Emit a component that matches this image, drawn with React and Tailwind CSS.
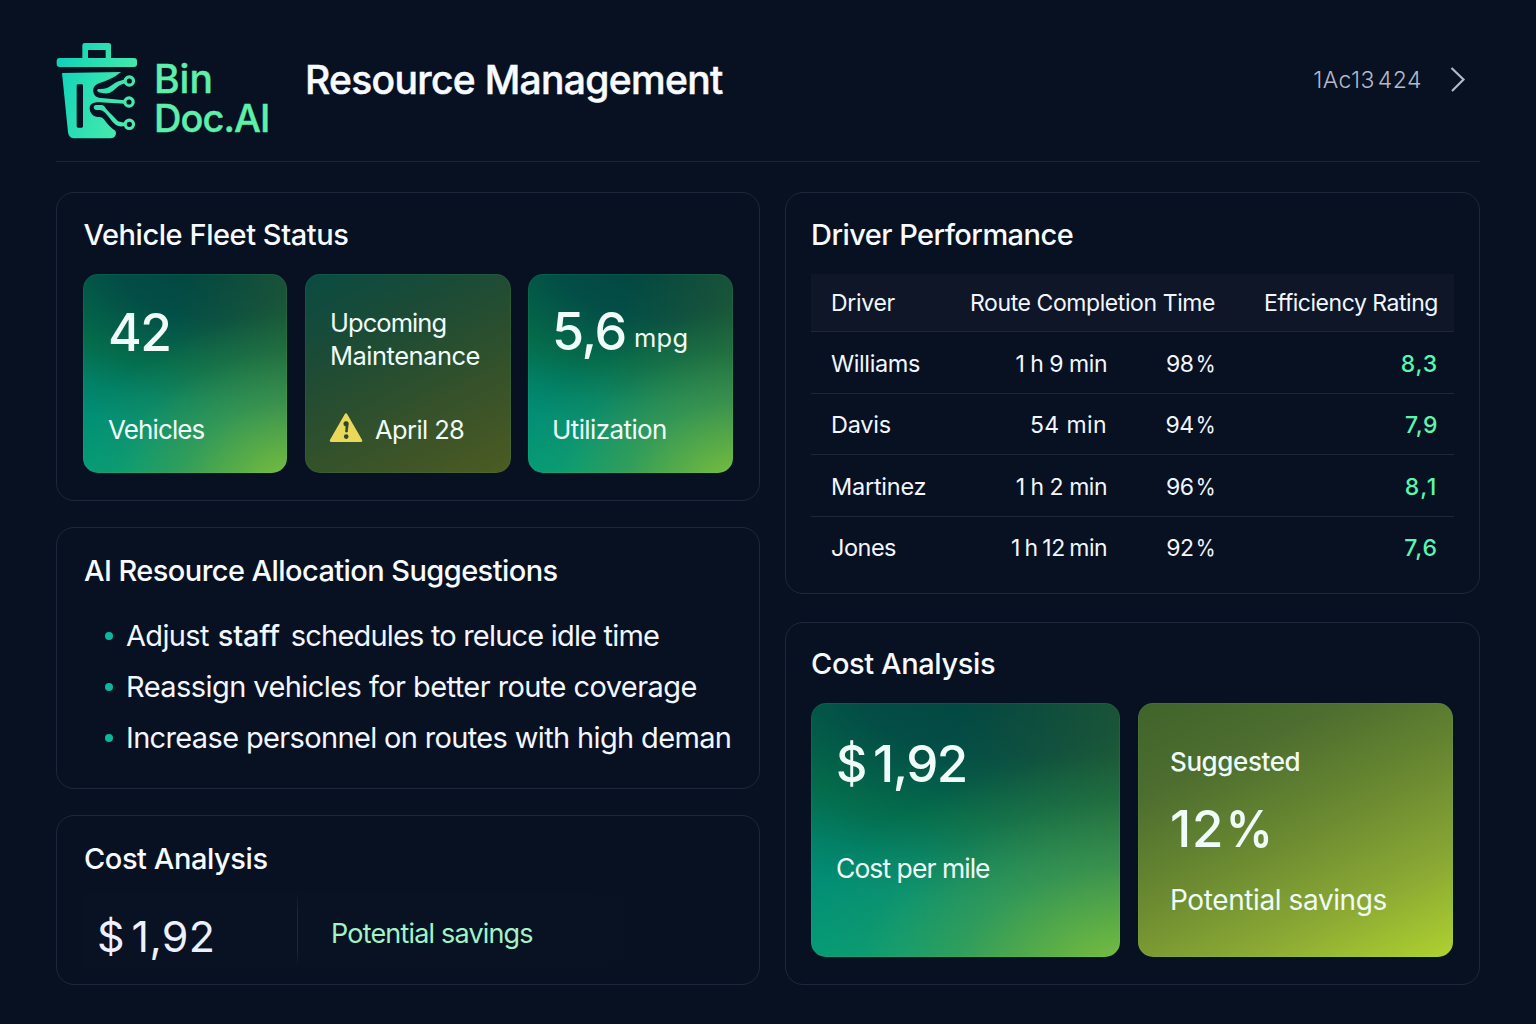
const drivers = [
  { name: "Williams", nameCls: "tracking-[-0.4px]", time: "1 h 9 min", timeCls: "tracking-[-0.48px]", pct: 98, rating: "8,3", ratingCls: "tracking-[0.8px]" },
  { name: "Davis", nameCls: "tracking-[-0.23px]", time: "54 min", timeCls: "tracking-[0.4px]", pct: 94, rating: "7,9", ratingCls: "tracking-[0.5px]" },
  { name: "Martinez", nameCls: "tracking-[-0.25px]", time: "1 h 2 min", timeCls: "tracking-[-0.48px]", pct: 96, rating: "8,1", ratingCls: "tracking-[1.6px]" },
  { name: "Jones", nameCls: "tracking-[-0.5px]", time: "1 h 12 min", timeCls: "tracking-[-0.55px] [word-spacing:-1.2px]", pct: 92, rating: "7,6", ratingCls: "tracking-[0.9px]" },
];

const greenTile =
  "bg-[radial-gradient(ellipse_115%_90%_at_106%_110%,#86c63f_0%,rgba(112,188,66,0.85)_22%,rgba(80,170,80,0.52)_52%,rgba(50,150,90,0.2)_80%,transparent_100%),linear-gradient(105deg,transparent_40%,rgba(62,92,34,0.55)_100%),radial-gradient(ellipse_135%_88%_at_60%_-10%,#034540_0%,rgba(3,72,66,0.88)_35%,rgba(5,100,62,0.72)_65%,rgba(4,118,80,0.35)_85%,transparent_100%),linear-gradient(180deg,#027260_0%,#028573_50%,#029c78_100%)]";

function Panel({ className = "", children }) {
  return (
    <section className={`flex flex-col rounded-[18px] border border-[#1d293a] bg-[#071122] ${className}`}>{children}</section>
  );
}

function Tile({ className = "", children }) {
  return (
    <div className={`flex flex-col rounded-[15px] shadow-[inset_0_0_0_1px_rgba(120,255,170,0.07)] ${className}`}>{children}</div>
  );
}

function Logo() {
  return (
    <svg className="h-[97px] w-[82px] shrink-0" viewBox="48 36 246 291" aria-hidden="true">
      <defs>
        <linearGradient id="bin" gradientUnits="userSpaceOnUse" x1="50" y1="140" x2="290" y2="220">
          <stop offset="0" stopColor="#12d3ba" />
          <stop offset="0.45" stopColor="#2ce0b2" />
          <stop offset="1" stopColor="#4cecab" />
        </linearGradient>
      </defs>
      <g fill="url(#bin)">
        <path fillRule="evenodd" d="M134 39H206Q213 39 213 46V86H127V46Q127 39 134 39ZM144 60V85H197V60Z" />
        <rect x="50" y="84" width="241" height="27" rx="9" />
        <path
          fillRule="evenodd"
          d="M66 129L243 126C222 144 200 152 181 158C165 163 158 172 160 185C162 198 171 203 184 204L254 211V221L178 217C160 216 149 222 149 235C149 249 160 261 174 261C186 260 191 266 198 276C206 287 216 295 224 301C233 309 226 325 212 325H104Q86 325 84 307ZM114 163Q110 163 110 167V289Q110 293 114 293H125Q129 293 129 289V167Q129 163 125 163Z"
        />
        <path d="M175 177Q190 178 201 174C212 169 216 164 226 158C236 153 246 151 256 148L258 159C248 162 240 165 233 170C222 179 215 188 203 190Q189 191 176 187Q167 181 175 177Z" />
        <path d="M167 225H185C193 226 196 233 202 241C211 251 223 261 231 271Q237 277 254 278L254 288Q238 292 228 285C216 276 208 261 196 249C189 242 184 240 170 240Q161 239 161 232Q161 226 167 225Z" />
      </g>
      <g fill="none" stroke="url(#bin)" strokeWidth="9.5">
        <circle cx="268" cy="153" r="12.5" />
        <circle cx="267" cy="216" r="12.5" />
        <circle cx="268" cy="283" r="12.5" />
      </g>
    </svg>
  );
}

function Header() {
  return (
    <header className="flex h-[162px] items-start border-b border-[#1a2536]">
      <div className="flex pt-[42px]">
        <Logo />
        <div className="ml-4 mt-[18px] flex w-[120px] flex-col text-[39px] font-medium leading-[38px] text-[#5eefab] [-webkit-text-stroke:0.4px_#5eefab]">
          <span>Bin</span>
          <span className="mt-[1px] text-[38px] tracking-[-0.95px]">Doc.AI</span>
        </div>
      </div>
      <h1 className="ml-[31px] mt-[60px] text-[39px] font-medium leading-[40px] tracking-[-0.68px] text-[#f8fbff] [-webkit-text-stroke:0.5px_#f8fbff]">
        Resource Management
      </h1>
      <div className="ml-auto mr-[14px] mt-[64px] flex h-8 items-center text-[23px] font-light leading-8 text-[#b4b8ca]">
        <span className="tracking-[0.4px]">1Ac13</span>
        <span className="ml-[3px] tracking-[0.5px]">424</span>
        <svg className="ml-[28px] h-[26px] w-4" viewBox="0 0 16 26" fill="none" stroke="#b4b8ca" strokeWidth="2.2" aria-hidden="true">
          <path d="M1.5 1L13.5 12.5L2 24" />
        </svg>
      </div>
    </header>
  );
}

const heading = "text-[29px] font-medium leading-[36px] text-[#f8fbff]";

function FleetStatus() {
  return (
    <Panel className="h-[309px] pl-[26px] pt-[24px]">
      <h2 className={`${heading} ml-[0.5px] tracking-[-0.45px]`}>Vehicle Fleet Status</h2>
      <div className="mt-[21px] flex h-[199px] text-[#effcf8]">
        <Tile className={`w-[204px] pl-[25px] pt-[32px] ${greenTile}`}>
          <span className="text-[51.5px] font-medium leading-[52px] tracking-[-1.6px]">42</span>
          <span className="mt-[56px] text-[26px] leading-8 tracking-[-0.88px]">Vehicles</span>
        </Tile>
        <Tile className="ml-[18px] w-[206px] bg-[linear-gradient(152deg,#0a4b43_0%,#1c4b36_30%,#2b4f2e_52%,#3d5428_76%,#4c5c22_100%)] pl-[25px] pt-[32px]">
          <span className="text-[25.5px] leading-[33px] tracking-[-0.95px]">Upcoming</span>
          <span className="text-[25.5px] leading-[33px] tracking-[-0.5px]">Maintenance</span>
          <div className="-ml-[1px] mt-[42px] flex h-8">
            <svg className="-mt-[2px] h-[31px] w-[34px]" viewBox="0 0 34 31" aria-hidden="true">
              <path d="M17 2.6L32 28.6H2Z" fill="#ead85a" stroke="#ead85a" strokeWidth="2.6" strokeLinejoin="round" />
              <path d="M14.8 11.5Q14.6 9.6 17 9.6Q19.6 9.6 19.3 11.8L18.3 20H16.6L17 14L15.2 13.5Z" fill="#29472c" stroke="#29472c" strokeWidth="0.7" />
              <circle cx="17.2" cy="24.6" r="2.3" fill="#29472c" />
            </svg>
            <span className="ml-[12px] text-[25.5px] leading-8 tracking-[-0.6px]">April 28</span>
          </div>
        </Tile>
        <Tile className={`ml-[17px] w-[205px] pl-[24px] pt-[32px] ${greenTile}`}>
          <div className="flex h-[52px] items-baseline">
            <span className="text-[52px] font-medium leading-[52px] tracking-[-1.3px]">5,6</span>
            <span className="ml-[8px] -translate-y-[3px] text-[25.5px] leading-8 tracking-[0.2px]">mpg</span>
          </div>
          <span className="mt-[56px] text-[26px] leading-8 tracking-[-0.6px]">Utilization</span>
        </Tile>
      </div>
    </Panel>
  );
}

function Suggestion({ children, className = "" }) {
  return (
    <li className={`flex h-[51px] items-center whitespace-pre ${className}`}>
      <span className="mr-[13px] size-2 shrink-0 rounded-full bg-[#0bb89e]" />
      {children}
    </li>
  );
}

function Suggestions() {
  return (
    <Panel className="h-[262px] pl-[27px] pt-[25px]">
      <h2 className={`${heading} tracking-[-0.57px]`}>AI Resource Allocation Suggestions</h2>
      <ul className="ml-[21px] mt-[21px] text-[29px] leading-[51px] text-[#f2f6ff]">
        <Suggestion>
          <span className="tracking-[-0.65px]">Adjust</span>
          <span className="ml-[9px] font-medium tracking-[-0.2px]">staff</span>
          <span className="ml-[11px] tracking-[-0.81px]">schedules to reluce idle time</span>
        </Suggestion>
        <Suggestion className="tracking-[-0.57px]">Reassign vehicles for better route coverage</Suggestion>
        <Suggestion className="tracking-[-0.65px]">Increase personnel on routes with high deman</Suggestion>
      </ul>
    </Panel>
  );
}

function CostSummary() {
  return (
    <Panel className="h-[170px] pl-[27px] pt-[25px]">
      <h2 className={`${heading} tracking-[-0.43px]`}>Cost Analysis</h2>
      <div className="mt-[16px] flex h-[74px] w-[650px] bg-[linear-gradient(90deg,#091223,#091223_60%,#071122)]">
        <div className="flex w-[213px] pl-[13px] pt-[17px] text-[43px] leading-[52px] text-[#edf0ff]">
          <span>$</span>
          <span className="ml-[7px] tracking-[0.3px]">1,92</span>
        </div>
        <div className="w-px bg-[linear-gradient(180deg,transparent,#1d2839_25%,#1d2839_75%,transparent)]" />
        <span className="ml-[33px] mt-[25px] text-[27px] leading-8 tracking-[-0.82px] text-[#a2f3c6]">Potential savings</span>
      </div>
    </Panel>
  );
}

const row = "grid grid-cols-[140px_156px_108px_223px] items-center";

function DriverPerformance() {
  return (
    <Panel className="h-[402px] pl-[25px] pt-[24px]">
      <h2 className={`${heading} tracking-[-0.54px]`}>Driver Performance</h2>
      <div className="mt-[21px] w-[643px] text-[23px] leading-8 text-[#f2f6ff]">
        <div className={`${row} h-[58px] border-b border-[#1c2738] bg-[#0e1628]`}>
          <span className="pl-5 tracking-[-0.31px]">Driver</span>
          <span className="col-span-2 text-right tracking-[-0.42px]">Route Completion Time</span>
          <span className="text-right tracking-[-0.46px]">Efficiency Rating</span>
        </div>
        {drivers.map((d) => (
          <div key={d.name} className={`${row} h-[61.5px] border-b border-[#1c2738] pt-[3px] last:border-b-0 last:pt-[1px]`}>
            <span className={`pl-5 text-[23.5px] ${d.nameCls}`}>{d.name}</span>
            <span className={`text-right ${d.timeCls}`}>{d.time}</span>
            <span className="-mr-[0.5px] flex justify-end tracking-[-0.6px]">
              {d.pct}
              <span className="-ml-[0.5px] origin-right scale-x-[0.88] tracking-normal">%</span>
            </span>
            <span className={`text-right font-medium text-[#5cf5b0] ${d.ratingCls}`}>{d.rating}</span>
          </div>
        ))}
      </div>
    </Panel>
  );
}

function CostAnalysis() {
  return (
    <Panel className="h-[363px] pl-[25px] pt-[23px]">
      <h2 className={`${heading} tracking-[-0.39px]`}>Cost Analysis</h2>
      <div className="mt-[21px] flex h-[254px] text-[#effcf8]">
        <Tile className={`w-[309px] pl-[25px] pt-[35px] ${greenTile}`}>
          <div className="flex text-[51px] font-medium leading-[52px]">
            <span className="w-[32px] origin-left scale-x-[0.95]">$</span>
            <span className="ml-[5px] tracking-[-1.5px]">1,92</span>
          </div>
          <span className="mt-[62px] text-[26.5px] leading-8 tracking-[-0.95px]">Cost per mile</span>
        </Tile>
        <Tile className="ml-[18px] w-[315px] bg-[linear-gradient(155deg,#40632b_0%,#4d6e2f_24%,#6a8931_50%,#8aa834_75%,#afd22f_100%)] pl-8 pt-[43px]">
          <span className="text-[26px] font-medium leading-8 tracking-[-0.41px]">Suggested</span>
          <div className="mt-[25px] flex text-[51px] font-medium leading-[52px]">
            <span className="tracking-[0.9px]">12</span>
            <span className="ml-[2px] origin-left scale-x-[0.91] font-semibold">%</span>
          </div>
          <span className="mt-[29px] text-[28px] leading-8 tracking-[-0.4px]">Potential savings</span>
        </Tile>
      </div>
    </Panel>
  );
}

export default function App() {
  return (
    <div className="h-[1024px] w-[1536px] overflow-hidden bg-[#071122] px-14 font-['Inter',sans-serif]">
      <Header />
      <main className="mt-[30px] flex gap-[25px]">
        <div className="flex w-[704px] flex-col">
          <FleetStatus />
          <div className="mt-[26px]">
            <Suggestions />
          </div>
          <div className="mt-[26px]">
            <CostSummary />
          </div>
        </div>
        <div className="flex w-[695px] flex-col gap-[28px]">
          <DriverPerformance />
          <CostAnalysis />
        </div>
      </main>
    </div>
  );
}
